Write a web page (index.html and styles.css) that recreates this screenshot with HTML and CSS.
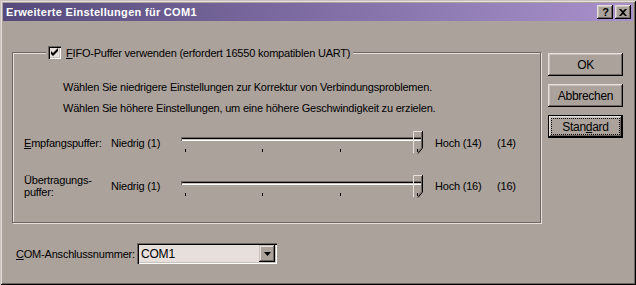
FILE: index.html
```html
<!DOCTYPE html>
<html>
<head>
    <title>Erweiterte Einstellungen für COM1</title>
    <link rel="stylesheet" href="styles.css">
</head>
<body>
    <div class="window">
        <div class="titlebar">
            <span class="title">Erweiterte Einstellungen für COM1</span>
            <span class="cap-btn help">?</span>
            <span class="cap-btn">
                <svg width="8" height="7" viewBox="0 0 8 7"><path d="M0 0h2l2 2 2-2h2L5 3.5 8 7H6L4 5 2 7H0l3-3.5z" fill="#000"/></svg>
            </span>
        </div>

        <div class="client">
            <div class="main">
                <fieldset class="group">
                    <legend class="group-title">
                        <span class="check">
                            <svg width="9" height="9" viewBox="0 0 9 9"><path d="M1 3l2 2 5-5v3L3 8 1 6z" fill="#000"/></svg>
                        </span>
                        <span><u>F</u>IFO-Puffer verwenden (erfordert 16550 kompatiblen UART)</span>
                    </legend>

                    <p class="hint">Wählen Sie niedrigere Einstellungen zur Korrektur von Verbindungsproblemen.</p>
                    <p class="hint">Wählen Sie höhere Einstellungen, um eine höhere Geschwindigkeit zu erzielen.</p>

                    <div class="slider-row">
                        <span class="slider-label"><u>E</u>mpfangspuffer:</span>
                        <span>Niedrig (1)</span>
                        <div class="slider">
                            <div class="track"></div>
                            <div class="ticks"><i></i><i></i><i></i><i></i></div>
                            <svg class="thumb" width="10" height="23" viewBox="0 0 10 23">
                                <path d="M0.5 22V0.5H9" fill="none" stroke="#e6dfdb"/>
                                <path d="M9.5 0v17L5 22.5" fill="none" stroke="#000"/>
                                <path d="M8.5 1v15.5L5 21" fill="none" stroke="#6f6661"/>
                            </svg>
                        </div>
                        <span class="high">Hoch (14)</span>
                        <span>(14)</span>
                    </div>

                    <div class="slider-row">
                        <span class="slider-label">Übertragungs-<br>puffer:</span>
                        <span>Niedrig (1)</span>
                        <div class="slider">
                            <div class="track"></div>
                            <div class="ticks"><i></i><i></i><i></i><i></i></div>
                            <svg class="thumb" width="10" height="23" viewBox="0 0 10 23">
                                <path d="M0.5 22V0.5H9" fill="none" stroke="#e6dfdb"/>
                                <path d="M9.5 0v17L5 22.5" fill="none" stroke="#000"/>
                                <path d="M8.5 1v15.5L5 21" fill="none" stroke="#6f6661"/>
                            </svg>
                        </div>
                        <span class="high">Hoch (16)</span>
                        <span>(16)</span>
                    </div>
                </fieldset>

                <div class="com-row">
                    <span class="com-label"><u>C</u>OM-Anschlussnummer:</span>
                    <div class="combo">
                        <span class="combo-text">COM1</span>
                        <span class="combo-btn">
                            <svg width="7" height="4" viewBox="0 0 7 4"><path d="M0 0h7L3.5 4z" fill="#000"/></svg>
                        </span>
                    </div>
                </div>
            </div>

            <div class="buttons">
                <div class="btn">OK</div>
                <div class="btn">Abbrechen</div>
                <div class="btn default"><span class="focus">Stan<u>d</u>ard</span></div>
            </div>
        </div>
    </div>
</body>
</html>
```

FILE: styles.css
```css
/* Basic page setup */
* {
    box-sizing: border-box;
}

body {
    margin: 0;
    font-family: "Liberation Sans", Arial, sans-serif;
    font-size: 11px;
    letter-spacing: -0.2px;
    color: #000;
}

u {
    text-decoration-thickness: 1px;
    text-underline-offset: 1px;
}

/* Dialog frame */
.window {
    width: 636px;
    height: 285px;
    padding: 3px;
    background: #aba29c;
    box-shadow: inset 1px 1px #c9c1bc, inset -1px -1px #000,
                inset 2px 2px #e6dfdb, inset -2px -2px #6f6661;
    display: flex;
    flex-direction: column;
}

.titlebar {
    height: 18px;
    display: flex;
    align-items: center;
    padding: 0 2px 0 3px;
    background: linear-gradient(to right, #554a7b, #a991cc);
}

.title {
    flex: 1;
    color: #fff;
    font-weight: bold;
    letter-spacing: 0.3px;
}

.cap-btn {
    width: 16px;
    height: 14px;
    margin-left: 2px;
    display: flex;
    align-items: center;
    justify-content: center;
    background: #aba29c;
    box-shadow: inset -1px -1px #000, inset 1px 1px #e6dfdb,
                inset -2px -2px #6f6661, inset 2px 2px #c9c1bc;
    font-weight: bold;
    font-size: 11px;
    line-height: 14px;
}

.cap-btn.help {
    padding-left: 1px;
}

/* Client area */
.client {
    flex: 1;
    display: flex;
    padding: 25px 10px 0 9px;
}

.main {
    width: 529px;
}

/* Etched group box */
.group {
    margin: 0;
    height: 177px;
    padding: 22px 0 0 11px;
    border: 1px solid #6f6661;
    box-shadow: inset 1px 1px #e6dfdb, 1px 1px #e6dfdb;
}

.group-title {
    margin-left: 22px;
    padding: 0 3px 0 2px;
    height: 13px;
    display: flex;
    align-items: center;
    background: #aba29c;
}

.check {
    width: 13px;
    height: 13px;
    margin-right: 5px;
    display: flex;
    align-items: center;
    justify-content: center;
    background: #e6dfdb;
    box-shadow: inset 1px 1px #6f6661, inset 2px 2px #000,
                inset -1px -1px #fff, inset -2px -2px #c9c1bc;
}

.hint {
    margin: 0 0 8px 39px;
    line-height: 13px;
}

/* Slider rows */
.slider-row {
    display: grid;
    grid-template-columns: 87px 70px 254px 62px auto;
    align-items: center;
    height: 23px;
    margin-top: 16px;
    line-height: 12px;
}

.slider-row + .slider-row {
    margin-top: 20px;
}

.slider {
    position: relative;
    height: 23px;
}

.track {
    width: 241px;
    height: 4px;
    margin-top: 6px;
    box-shadow: inset 1px 1px #6f6661, inset 0 2px #000,
                inset -1px -1px #fff;
    background: #c9c1bc;
}

.ticks {
    width: 233px;
    margin: 8px 0 0 4px;
    display: flex;
    justify-content: space-between;
}

.ticks i {
    width: 1px;
    height: 3px;
    background: #000;
}

.thumb {
    position: absolute;
    left: 232px;
    top: 0;
}

/* COM port row */
.com-row {
    display: flex;
    align-items: center;
    margin-top: 20px;
    padding-left: 4px;
}

.com-label {
    width: 121px;
    white-space: nowrap;
}

.combo {
    width: 140px;
    height: 21px;
    display: flex;
    align-items: center;
    padding: 2px;
    background: #e6dfdb;
    box-shadow: inset 1px 1px #6f6661, inset 2px 2px #000,
                inset -1px -1px #fff, inset -2px -2px #c9c1bc;
}

.combo-text {
    flex: 1;
    padding-left: 2px;
    font-size: 12px;
}

.combo-btn {
    width: 16px;
    height: 17px;
    display: flex;
    align-items: center;
    justify-content: center;
    background: #aba29c;
    box-shadow: inset -1px -1px #000, inset 1px 1px #c9c1bc,
                inset -2px -2px #6f6661, inset 2px 2px #e6dfdb;
}

/* Command buttons */
.buttons {
    margin: 7px 0 0 7px;
    display: flex;
    flex-direction: column;
    gap: 8px;
}

.btn {
    width: 75px;
    height: 23px;
    display: flex;
    align-items: center;
    justify-content: center;
    background: #aba29c;
    box-shadow: inset -1px -1px #000, inset 1px 1px #e6dfdb,
                inset -2px -2px #6f6661, inset 2px 2px #c9c1bc;
    font-size: 12px;
    letter-spacing: -0.3px;
}

.btn.default {
    border: 1px solid #000;
    padding: 3px;
}

.focus {
    flex: 1;
    align-self: stretch;
    display: flex;
    align-items: center;
    justify-content: center;
    outline: 1px dotted #000;
}
```
